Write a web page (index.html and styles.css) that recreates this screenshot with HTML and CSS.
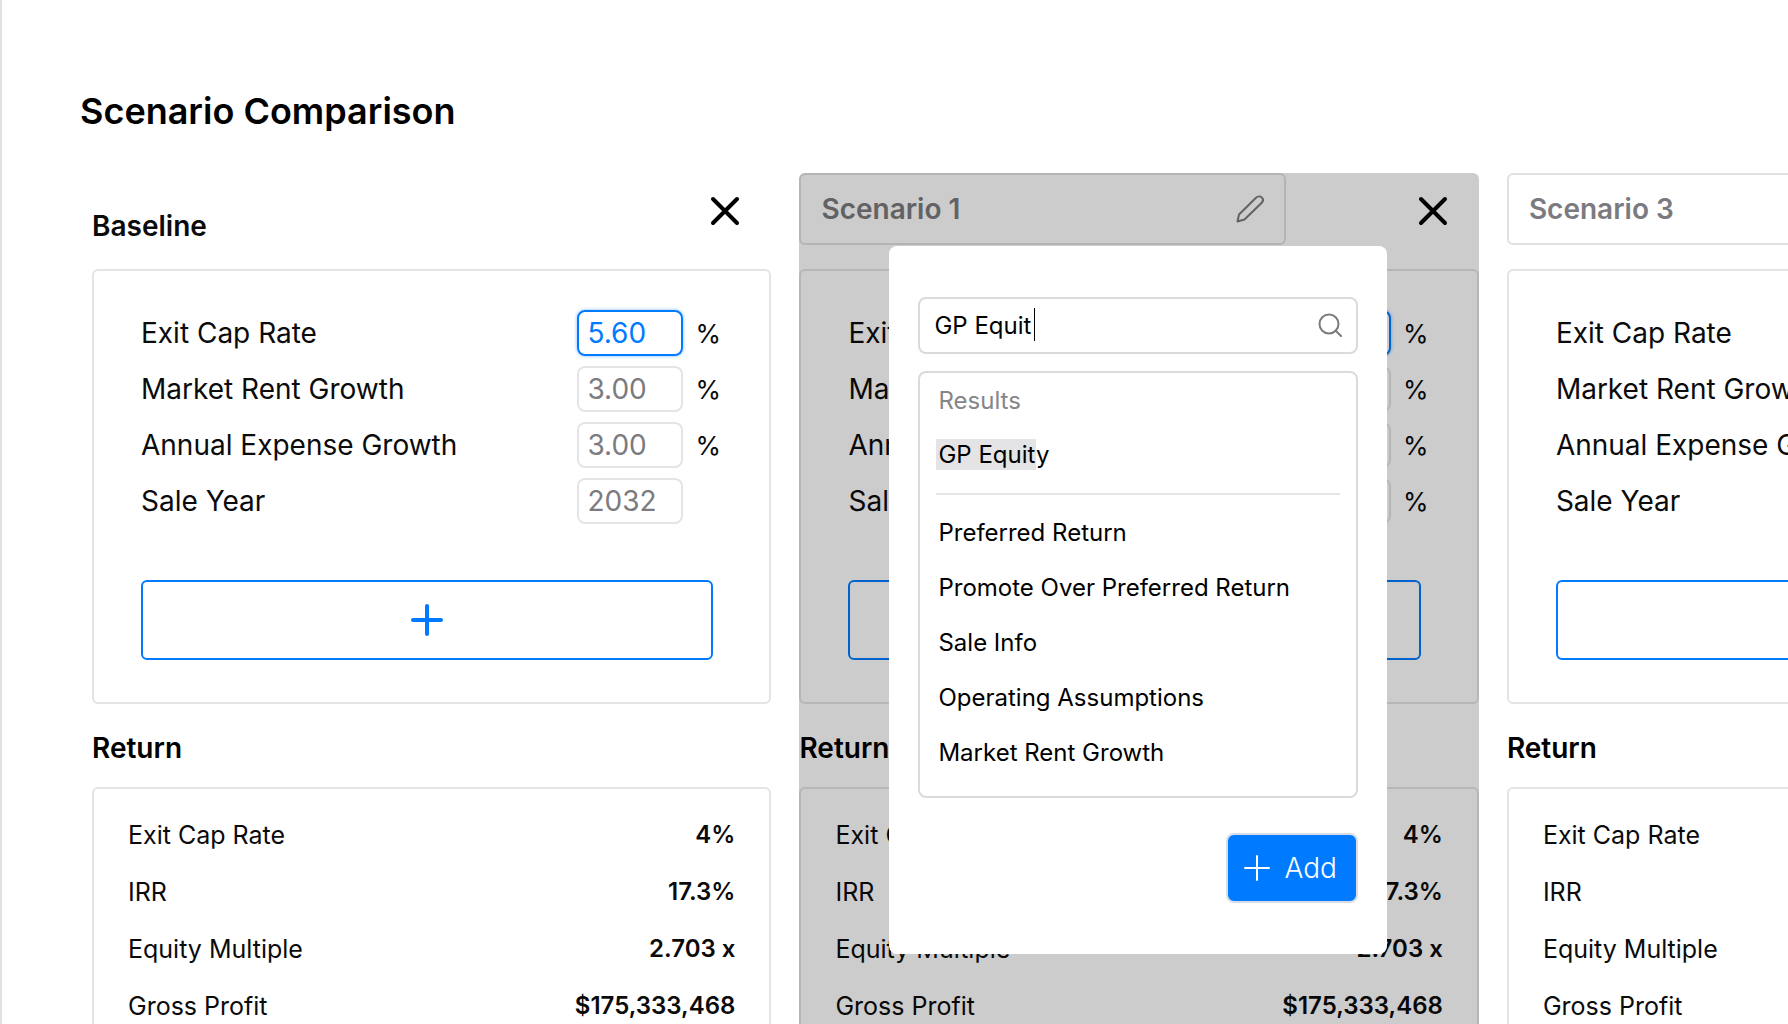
FILE: index.html
```html
<!DOCTYPE html>
<html lang="en">
<head>
  <meta charset="UTF-8">
  <meta name="viewport" content="width=device-width, initial-scale=1">
  <title>Scenario Comparison</title>
  <link rel="stylesheet" href="styles.css">
</head>
<body>
  <main class="page">
    <h1>Scenario Comparison</h1>

    <div class="scenarios">
      <!-- Baseline -->
      <section class="scenario">
        <div class="scenario-header">
          <h2 class="scenario-title">Baseline</h2>
          <button type="button" class="close-btn" aria-label="Remove Baseline">
            <svg width="30" height="30" viewBox="0 0 30 30"><path d="M3 3L27 27M27 3L3 27"/></svg>
          </button>
        </div>
        <div class="card inputs-card">
          <div class="input-row">
            <label for="base-cap">Exit Cap Rate</label>
            <input type="text" id="base-cap" class="active" value="5.60">
            <span class="unit">%</span>
          </div>
          <div class="input-row">
            <label for="base-rent">Market Rent Growth</label>
            <input type="text" id="base-rent" value="3.00">
            <span class="unit">%</span>
          </div>
          <div class="input-row">
            <label for="base-expense">Annual Expense Growth</label>
            <input type="text" id="base-expense" value="3.00">
            <span class="unit">%</span>
          </div>
          <div class="input-row">
            <label for="base-year">Sale Year</label>
            <input type="text" id="base-year" value="2032">
            <span class="unit"></span>
          </div>
          <button type="button" class="add-row" aria-label="Add assumption">
            <svg width="32" height="32" viewBox="0 0 32 32"><path d="M16 2V30M2 16H30"/></svg>
          </button>
        </div>
        <h3>Return</h3>
        <div class="card return-card">
          <table>
            <tr><th scope="row">Exit Cap Rate</th><td>4%</td></tr>
            <tr><th scope="row">IRR</th><td>17.3%</td></tr>
            <tr><th scope="row">Equity Multiple</th><td>2.703 x</td></tr>
            <tr><th scope="row">Gross Profit</th><td>$175,333,468</td></tr>
          </table>
        </div>
      </section>

      <!-- Scenario 1, dimmed behind the picker -->
      <section class="scenario">
        <div class="scenario-header">
          <div class="name-field">
            <input type="text" value="Scenario 1" aria-label="Scenario name">
            <svg width="28" height="28" viewBox="0 0 28 28"><path d="M1.500 26.500L3 19.500L20 2.800C22 1 24.500 1.200 25.900 2.600C27.200 4 27.200 6.300 25.500 8L8.500 24.500Z"/></svg>
          </div>
          <button type="button" class="close-btn" aria-label="Remove Scenario 1">
            <svg width="30" height="30" viewBox="0 0 30 30"><path d="M3 3L27 27M27 3L3 27"/></svg>
          </button>
        </div>
        <div class="card inputs-card">
          <div class="input-row">
            <label for="s1-cap">Exit Cap Rate</label>
            <input type="text" id="s1-cap" class="active" value="5.60">
            <span class="unit">%</span>
          </div>
          <div class="input-row">
            <label for="s1-rent">Market Rent Growth</label>
            <input type="text" id="s1-rent" value="3.00">
            <span class="unit">%</span>
          </div>
          <div class="input-row">
            <label for="s1-expense">Annual Expense Growth</label>
            <input type="text" id="s1-expense" value="3.00">
            <span class="unit">%</span>
          </div>
          <div class="input-row">
            <label for="s1-year">Sale Year</label>
            <input type="text" id="s1-year" value="2032">
            <span class="unit">%</span>
          </div>
          <button type="button" class="add-row" aria-label="Add assumption">
            <svg width="32" height="32" viewBox="0 0 32 32"><path d="M16 2V30M2 16H30"/></svg>
          </button>
        </div>
        <h3>Return</h3>
        <div class="card return-card">
          <table>
            <tr><th scope="row">Exit Cap Rate</th><td>4%</td></tr>
            <tr><th scope="row">IRR</th><td>17.3%</td></tr>
            <tr><th scope="row">Equity Multiple</th><td>2.703 x</td></tr>
            <tr><th scope="row">Gross Profit</th><td>$175,333,468</td></tr>
          </table>
        </div>

        <div class="overlay"></div>
        <div class="picker" role="dialog" aria-label="Add assumption">
          <div class="search-box">
            <input type="text" value="GP Equit" aria-label="Search assumptions">
            <span class="caret"></span>
            <svg width="26" height="26" viewBox="0 0 26 26"><circle cx="13" cy="11" r="9.500"/><path d="M19.500 17.500L25 23"/></svg>
          </div>
          <div class="results">
            <p class="results-label">Results</p>
            <button type="button" class="result"><mark>GP Equit</mark>y</button>
            <hr>
            <button type="button" class="result">Preferred Return</button>
            <button type="button" class="result">Promote Over Preferred Return</button>
            <button type="button" class="result">Sale Info</button>
            <button type="button" class="result">Operating Assumptions</button>
            <button type="button" class="result">Market Rent Growth</button>
          </div>
          <button type="button" class="add-btn">
            <svg width="26" height="26" viewBox="0 0 26 26"><path d="M13 1V25M1 13H25"/></svg>
            Add
          </button>
        </div>
      </section>

      <!-- Scenario 3 -->
      <section class="scenario">
        <div class="scenario-header">
          <div class="name-field">
            <input type="text" value="Scenario 3" aria-label="Scenario name">
            <svg width="28" height="28" viewBox="0 0 28 28"><path d="M1.500 26.500L3 19.500L20 2.800C22 1 24.500 1.200 25.900 2.600C27.200 4 27.200 6.300 25.500 8L8.500 24.500Z"/></svg>
          </div>
          <button type="button" class="close-btn" aria-label="Remove Scenario 3">
            <svg width="30" height="30" viewBox="0 0 30 30"><path d="M3 3L27 27M27 3L3 27"/></svg>
          </button>
        </div>
        <div class="card inputs-card">
          <div class="input-row">
            <label for="s3-cap">Exit Cap Rate</label>
            <input type="text" id="s3-cap" class="active" value="5.60">
            <span class="unit">%</span>
          </div>
          <div class="input-row">
            <label for="s3-rent">Market Rent Growth</label>
            <input type="text" id="s3-rent" value="3.00">
            <span class="unit">%</span>
          </div>
          <div class="input-row">
            <label for="s3-expense">Annual Expense Growth</label>
            <input type="text" id="s3-expense" value="3.00">
            <span class="unit">%</span>
          </div>
          <div class="input-row">
            <label for="s3-year">Sale Year</label>
            <input type="text" id="s3-year" value="2032">
            <span class="unit"></span>
          </div>
          <button type="button" class="add-row" aria-label="Add assumption">
            <svg width="32" height="32" viewBox="0 0 32 32"><path d="M16 2V30M2 16H30"/></svg>
          </button>
        </div>
        <h3>Return</h3>
        <div class="card return-card">
          <table>
            <tr><th scope="row">Exit Cap Rate</th><td>4%</td></tr>
            <tr><th scope="row">IRR</th><td>17.3%</td></tr>
            <tr><th scope="row">Equity Multiple</th><td>2.703 x</td></tr>
            <tr><th scope="row">Gross Profit</th><td>$175,333,468</td></tr>
          </table>
        </div>
      </section>
    </div>
  </main>
</body>
</html>
```
FILE: styles.css
```css
* {
  box-sizing: border-box;
}
body {
  margin: 0;
  font-family: Inter, "Liberation Sans", sans-serif;
  font-size: 28px;
  color: #0b0b0c;
  background: #fff;
}
h1, h2, h3, p {
  margin: 0;
}
button, input {
  font: inherit;
  color: inherit;
}
button {
  padding: 0;
  border: none;
  background: none;
  cursor: pointer;
}
svg {
  flex: none;
  fill: none;
  stroke: currentColor;
  stroke-linecap: round;
  stroke-linejoin: round;
}
.page {
  height: 100vh;
  overflow: hidden;
  padding: 89px 0 0 78px;
  border-left: 2px solid #e1e1e3;
}
h1 {
  font-size: 36px;
  line-height: 44px;
  font-weight: 600;
  color: #000;
}
.scenarios {
  display: grid;
  grid-auto-flow: column;
  grid-auto-columns: 38vw;
  gap: 28px;
  margin: 40px 0 0 12px;
}
.scenario {
  position: relative;
}

/* column header */
.scenario-header {
  display: flex;
  align-items: center;
  justify-content: space-between;
  height: 72px;
  padding-right: 31px;
}
.scenario-title {
  align-self: flex-end;
  font-size: 28px;
  line-height: 38px;
  font-weight: 600;
}
.close-btn {
  display: flex;
  margin-top: 4px;
  color: #000;
}
.close-btn svg {
  stroke-width: 4;
}
.name-field {
  display: flex;
  align-items: center;
  width: 75%;
  height: 72px;
  padding: 0 20px;
  border: 2px solid #e1e1e3;
  border-radius: 6px;
  color: #7b7b7f;
}
.name-field input {
  flex: 1;
  min-width: 0;
  padding: 0;
  border: none;
  outline: none;
  background: none;
  font-weight: 600;
}
.name-field svg {
  stroke-width: 2;
}

/* cards */
.card {
  border: 2px solid #e4e4e6;
  border-radius: 6px;
}
.inputs-card {
  display: flex;
  flex-direction: column;
  gap: 10px;
  margin-top: 24px;
  padding: 39px 50px 42px 47px;
}
.input-row {
  display: flex;
  align-items: center;
}
.input-row label {
  flex: 1;
}
.input-row input {
  width: 106px;
  height: 46px;
  padding: 0 8px;
  border: 2px solid #e4e4e6;
  border-radius: 8px;
  outline: none;
  background: none;
  color: #7b7b7f;
}
.input-row input.active {
  border-color: #007bff;
  color: #007bff;
  box-shadow: 0 0 3px 1px rgba(0, 123, 255, 0.3);
}
.unit {
  width: 24px;
  margin-left: 12px;
  font-size: 26px;
}
.add-row {
  display: flex;
  align-items: center;
  justify-content: center;
  height: 80px;
  margin: 46px 6px 0 0;
  border: 2px solid #007bff;
  border-radius: 6px;
  color: #007bff;
}
.add-row svg {
  stroke-width: 4;
}
h3 {
  margin: 27px 0 22px;
  font-size: 28px;
  line-height: 34px;
  font-weight: 600;
  color: #000;
}
.return-card {
  padding: 17px 34px;
}
.return-card table {
  width: 100%;
  border-collapse: collapse;
  font-size: 24px;
}
.return-card th, .return-card td {
  height: 57px;
  padding: 0;
}
.return-card th {
  text-align: left;
  font-size: 25px;
  font-weight: 400;
}
.return-card td {
  text-align: right;
  font-weight: 600;
}

/* picker over the column */
.overlay {
  position: absolute;
  inset: 0;
  border-radius: 6px;
  background: rgba(0, 0, 0, 0.2);
}
.picker {
  position: absolute;
  top: 73px;
  left: 90px;
  right: 92px;
  display: flex;
  flex-direction: column;
  padding: 51px 29px;
  border-radius: 8px;
  background: #fff;
  color: #000;
  font-size: 24px;
}
.search-box {
  position: relative;
  display: flex;
  align-items: center;
  height: 57px;
  padding: 0 14px;
  border: 2px solid #dadadc;
  border-radius: 8px;
}
.search-box input {
  flex: 1;
  min-width: 0;
  padding: 0;
  border: none;
  outline: none;
  background: none;
}
.caret {
  position: absolute;
  top: 9px;
  left: 114px;
  width: 1px;
  height: 33px;
  background: #000;
}
.search-box svg {
  color: #7b7b7f;
  stroke-width: 2;
}
.results {
  display: flex;
  flex-direction: column;
  margin-top: 17px;
  padding: 2px 16px 16px;
  border: 2px solid #dadadc;
  border-radius: 8px;
}
.results-label {
  padding-left: 2px;
  line-height: 52px;
  color: #85858a;
}
.result {
  padding-left: 2px;
  line-height: 55px;
  text-align: left;
}
.result mark {
  margin-left: -2px;
  padding: 1px 0 1px 2px;
  background: #e4e4e6;
  color: inherit;
}
.results hr {
  width: 100%;
  height: 2px;
  margin: 11px 0 10px;
  border: none;
  background: #e4e4e9;
}
.add-btn {
  display: flex;
  align-items: center;
  align-self: flex-end;
  gap: 14px;
  height: 70px;
  margin-top: 35px;
  padding: 0 19px 0 16px;
  border: 2px solid #d9dde3;
  border-radius: 8px;
  background: #007bff;
  color: #fff;
  font-size: 28px;
  font-weight: 300;
}
.add-btn svg {
  stroke-width: 2;
}
```
